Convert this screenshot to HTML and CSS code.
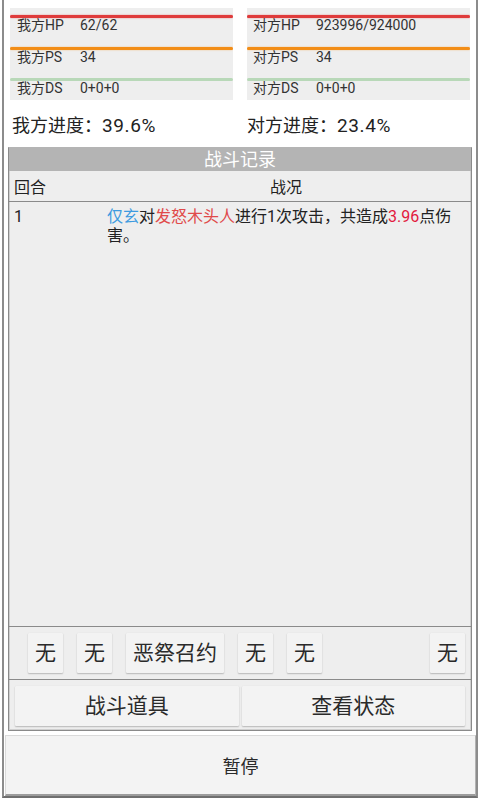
FILE: index.html
```html
<!DOCTYPE html>
<html lang="zh-CN">
<head>
<meta charset="utf-8">
<title>战斗</title>
<link rel="stylesheet" href="styles.css">
</head>
<body>
<div class="screen">
  <div class="frame">
    <div class="stats">
      <div class="panel">
        <div class="stat-row"><div class="bar bar-hp"></div><div class="stat-text"><span class="lbl">我方HP</span><span>62/62</span></div></div>
        <div class="stat-row"><div class="bar bar-ps"></div><div class="stat-text"><span class="lbl">我方PS</span><span>34</span></div></div>
        <div class="stat-row"><div class="bar bar-ds"></div><div class="stat-text"><span class="lbl">我方DS</span><span>0+0+0</span></div></div>
      </div>
      <div class="panel panel-right">
        <div class="stat-row"><div class="bar bar-hp"></div><div class="stat-text"><span class="lbl">对方HP</span><span>923996/924000</span></div></div>
        <div class="stat-row"><div class="bar bar-ps"></div><div class="stat-text"><span class="lbl">对方PS</span><span>34</span></div></div>
        <div class="stat-row"><div class="bar bar-ds"></div><div class="stat-text"><span class="lbl">对方DS</span><span>0+0+0</span></div></div>
      </div>
    </div>
    <div class="progress">
      <div class="prog prog-left">我方进度：<span class="num">39.6%</span></div>
      <div class="prog">对方进度：<span class="num">23.4%</span></div>
    </div>
    <div class="battle">
      <div class="battle-title">战斗记录</div>
      <div class="log-head">
        <div class="col1">回合</div>
        <div class="col2 center">战况</div>
      </div>
      <div class="log-body">
        <div class="log-row">
          <div class="col1">1</div>
          <div class="col2"><span class="blue">仅玄</span>对<span class="red">发怒木头人</span>进行1次攻击，共造成<span class="crimson">3.96</span>点伤害。</div>
        </div>
      </div>
      <div class="skills">
        <div class="btn skill">无</div>
        <div class="btn skill">无</div>
        <div class="btn skill">恶祭召约</div>
        <div class="btn skill">无</div>
        <div class="btn skill">无</div>
        <div class="btn skill skill-last">无</div>
      </div>
      <div class="actions">
        <div class="btn action">战斗道具</div>
        <div class="btn action">查看状态</div>
      </div>
    </div>
    <div class="pause">暂停</div>
  </div>
</div>
</body>
</html>
```
FILE: styles.css
```css
html, body {
  margin: 0;
  padding: 0;
  background: #ffffff;
}
body {
  font-family: Roboto, "Noto Sans CJK SC", sans-serif;
  color: #333333;
}
.screen {
  width: 480px;
  height: 800px;
  box-sizing: border-box;
  padding: 0 2px 2px 2px;
}
.frame {
  height: 100%;
  box-sizing: border-box;
  border-left: 2px solid #8c8c8c;
  border-right: 2px solid #8c8c8c;
  border-bottom: 2px solid #6f6f6f;
  display: flex;
  flex-direction: column;
}
.stats {
  display: grid;
  grid-template-columns: 223px 223px;
  column-gap: 14px;
  padding: 8px 6px 0 6px;
}
.panel {
  height: 92px;
  background: #eeeeee;
  padding-top: 7px;
  box-sizing: border-box;
  overflow: hidden;
}
.stat-row {
  height: 31.5px;
}
.bar {
  height: 3px;
  border-radius: 2px;
}
.bar-hp {
  background: #df3b3b;
  box-shadow: 0 0 1.5px #e46a6a;
}
.bar-ps {
  background: #f28d17;
  box-shadow: 0 0 1.5px #f5b060;
}
.bar-ds {
  background: #b8d8b8;
}
.stat-text {
  font-size: 14px;
  line-height: 14px;
  padding-left: 7px;
  color: #333333;
}
.panel-right .stat-text {
  padding-left: 6px;
}
.lbl {
  display: inline-block;
  width: 63px;
}
.progress {
  display: grid;
  grid-template-columns: 223px 223px;
  column-gap: 14px;
  padding: 14px 6px 9px 6px;
  height: 47px;
  box-sizing: border-box;
}
.prog {
  font-size: 18px;
  line-height: 24px;
  color: #222222;
}
.num {
  font-size: 19px;
  letter-spacing: 0.6px;
}
.prog-left {
  padding-left: 2px;
}
.battle {
  margin: 0 4px;
  height: 584px;
  box-sizing: border-box;
  border: 1px solid #8a8a8a;
  border-top-color: #b4b4b4;
  box-shadow: inset 0 0 0 1px #cfcfcf;
  display: flex;
  flex-direction: column;
  background: #eeeeee;
}
.battle-title {
  height: 23px;
  line-height: 23px;
  background: #b4b4b4;
  color: #ffffff;
  font-size: 18px;
  text-align: center;
}
.log-head {
  display: flex;
  height: 31px;
  box-sizing: border-box;
  padding-top: 4px;
  line-height: 26px;
  font-size: 16px;
  border-bottom: 1px solid #8a8a8a;
  color: #222222;
}
.col1 {
  width: 98px;
  flex: none;
  padding-left: 5px;
  box-sizing: border-box;
}
.col2 {
  flex: 1;
  padding-right: 6px;
}
.center {
  text-align: center;
}
.log-body {
  flex: 1;
}
.log-row {
  display: flex;
  padding-top: 5px;
  font-size: 16px;
  line-height: 19px;
  color: #222222;
}
.blue { color: #3d9be0; }
.red { color: #e04a4a; }
.crimson { color: #e2193e; }
.skills {
  display: flex;
  border-top: 1px solid #8a8a8a;
  border-bottom: 1px solid #8a8a8a;
  padding: 6px 6px 6px 19px;
  gap: 14px;
}
.btn {
  background: #f3f3f3;
  box-shadow: 0 1px 1.5px rgba(0, 0, 0, 0.22), 0 0 1px rgba(0, 0, 0, 0.08);
  color: #2a2a2a;
  font-size: 21px;
  text-align: center;
  border-radius: 1px;
}
.skill {
  height: 40px;
  line-height: 40px;
  padding: 0 7px;
}
.skill-last {
  margin-left: auto;
}
.actions {
  display: flex;
  gap: 3px;
  padding: 6px 6px 4px 6px;
}
.action {
  flex: 1;
  height: 40px;
  line-height: 40px;
}
.pause {
  margin: 4px 0 0 1px;
  flex: 1;
  box-sizing: border-box;
  background: #f3f3f3;
  border: 1px solid #dadada;
  border-right-color: #b2b2b2;
  border-bottom: 2px solid #9c9c9c;
  font-size: 18px;
  color: #2a2a2a;
  display: flex;
  align-items: center;
  justify-content: center;
}
```
